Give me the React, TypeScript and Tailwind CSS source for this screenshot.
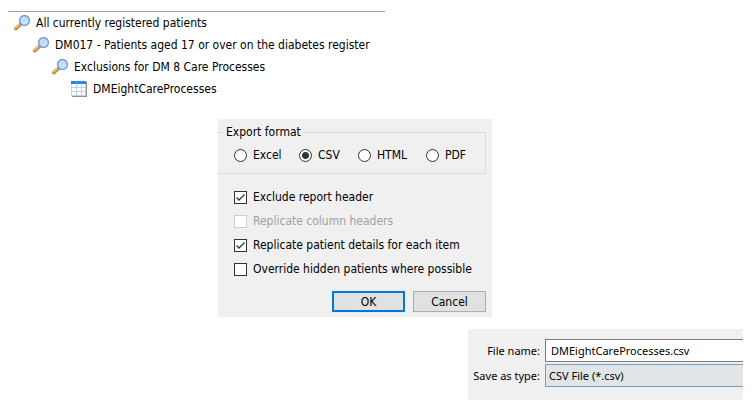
import { useState } from "react";
import clsx from "clsx";

const tree = [
  { label: "All currently registered patients", icon: "search", indent: "pl-[6px]" },
  { label: "DM017 - Patients aged 17 or over on the diabetes register", icon: "search", indent: "pl-[25px]" },
  { label: "Exclusions for DM 8 Care Processes", icon: "search", indent: "pl-[44px]" },
  { label: "DMEightCareProcesses", icon: "table", indent: "pl-[63px]" },
];

const formats = [
  { label: "Excel", width: "w-[65px]" },
  { label: "CSV", width: "w-[59px]" },
  { label: "HTML", width: "w-[68px]" },
  { label: "PDF", width: "w-[42px]" },
];

const options = [
  { label: "Exclude report header", checked: true, disabled: false },
  { label: "Replicate column headers", checked: false, disabled: true },
  { label: "Replicate patient details for each item", checked: true, disabled: false },
  { label: "Override hidden patients where possible", checked: false, disabled: false },
];

function SearchIcon() {
  return (
    <svg width="16" height="16" viewBox="0 0 16 16" className="shrink-0" aria-hidden="true">
      <defs>
        <linearGradient id="lens" x1="0" y1="0" x2="0.6" y2="1">
          <stop offset="0" stopColor="#a9cbfb" />
          <stop offset="1" stopColor="#d0eaff" />
        </linearGradient>
      </defs>
      <path d="M1.8 13.6 6.6 9.2" stroke="#c08440" strokeWidth="3.5" strokeLinecap="round" />
      <path d="M1.5 13 6 8.8" stroke="#f6bf72" strokeWidth="1.7" strokeLinecap="round" />
      <path d="M6 9.8 7.4 8.4" stroke="#8d93a8" strokeWidth="2" />
      <circle cx="10.5" cy="5.5" r="4.9" fill="url(#lens)" stroke="#7193e6" strokeWidth="1.3" />
      <path d="M7.4 5a3.2 3.2 0 0 1 3-2.6" fill="none" stroke="#dbe9ff" strokeWidth="1" />
    </svg>
  );
}

function TableIcon() {
  return (
    <svg width="16" height="16" viewBox="0 0 16 16" className="shrink-0" shapeRendering="crispEdges" aria-hidden="true">
      <path d="M1 1h15v15H1z" fill="#8f8f8f" />
      <path d="M0 3h15v12H0z" fill="#bdd3ea" />
      <path d="M0 0h15v3H0z" fill="#2484ea" />
      <path d="M1 3h4v3H1zM6 3h4v3H6zM11 3h3v3h-3zM1 7h4v3H1zM6 7h4v3H6zM11 7h3v3h-3zM1 11h4v3H1zM6 11h4v3H6zM11 11h3v3h-3z" fill="#fff" />
      <path d="M5 0h1v3H5zM10 0h1v3h-1z" fill="#4a9df2" />
    </svg>
  );
}

function ReportTree() {
  return (
    <ul className="mr-auto w-full max-w-[377px] border-t border-[#a0a0a0]">
      {tree.map(({ label, icon, indent }) => (
        <li key={label} className={clsx("flex h-[22px] items-center gap-[6px] whitespace-nowrap", indent)}>
          {icon === "search" ? <SearchIcon /> : <TableIcon />}
          {label}
        </li>
      ))}
    </ul>
  );
}

function ExportDialog() {
  const [format, setFormat] = useState("CSV");
  const [checked, setChecked] = useState(options.map((o) => o.checked));

  return (
    <form className="w-full max-w-[274px] bg-[#f0f0f0] pt-[5px] pr-[6px] pb-[5px]" onSubmit={(e) => e.preventDefault()}>
      <fieldset className="border border-l-0 border-[#dcdcdc] pb-[10px] pl-4">
        <legend className="-ml-[10px] pr-[2px] pl-[2px] leading-4">Export format</legend>
        <div className="flex pt-[7px]">
          {formats.map(({ label, width }) => (
            <label key={label} className={clsx("flex h-4 items-center gap-[6px]", width)}>
              <input type="radio" name="format" checked={format === label} onChange={() => setFormat(label)}
                className="size-[13px] shrink-0 appearance-none rounded-full border border-[#333] bg-white bg-clip-padding checked:bg-[radial-gradient(circle,#333_3px,#fff_4px)]" />
              {label}
            </label>
          ))}
        </div>
      </fieldset>

      <div className="pt-[11px] pl-4">
        {options.map(({ label, disabled }, i) => (
          <label key={label} className={clsx("flex h-6 items-center gap-[6px] whitespace-nowrap", disabled && "text-[#a0a0a0]")}>
            <span className="relative flex size-[13px] shrink-0">
              <input type="checkbox" disabled={disabled} checked={checked[i]}
                onChange={() => setChecked(checked.map((c, n) => (n === i ? !c : c)))}
                className="size-[13px] appearance-none border border-[#333] bg-white disabled:border-[#ccc]" />
              {checked[i] && (
                <svg viewBox="0 0 13 13" className="pointer-events-none absolute inset-0 size-[13px]" aria-hidden="true">
                  <path d="M2.5 6.5 5 9l5.5-5.5" fill="none" stroke="#333" strokeWidth="1.3" />
                </svg>
              )}
            </span>
            {label}
          </label>
        ))}
      </div>

      <div className="flex justify-end gap-2 pt-[10px]">
        <button type="submit" className="h-[21px] w-[73px] border-2 border-[#0078d7] bg-[#e1e1e1] leading-4">OK</button>
        <button type="button" className="h-[21px] w-[73px] border border-[#adadad] bg-[#e1e1e1] leading-4">Cancel</button>
      </div>
    </form>
  );
}

function SavePanel() {
  return (
    <div className="grid w-full max-w-[275px] grid-cols-[72px_1fr] items-center gap-x-[5px] gap-y-[2px] bg-[#f0f0f0] pt-[10px] pb-[13px] font-['Noto_Sans',sans-serif] text-[11px] whitespace-nowrap">
      <label htmlFor="file-name" className="text-right">File name:</label>
      <input id="file-name" type="text" defaultValue="DMEightCareProcesses.csv"
        className="h-[23px] w-full min-w-0 border border-r-0 border-[#7a7a7a] bg-white pl-[5px]" />
      <label htmlFor="file-type" className="text-right">Save as type:</label>
      <select id="file-type" className="h-[23px] w-full min-w-0 appearance-none border border-r-0 border-[#7a9ebf] bg-[#e1e5e8] pl-[3px]">
        <option>CSV File (*.csv)</option>
      </select>
    </div>
  );
}

export default function App() {
  return (
    <main className="min-h-screen bg-white font-['DejaVu_Sans_Condensed','DejaVu_Sans',sans-serif] text-[12px] leading-4 text-black">
      <div className="px-2 pt-[11px]">
        <ReportTree />
      </div>
      <div className="flex justify-center pt-[19px] pr-[45px]">
        <ExportDialog />
      </div>
      <div className="flex justify-end pt-3 pr-3">
        <SavePanel />
      </div>
    </main>
  );
}
